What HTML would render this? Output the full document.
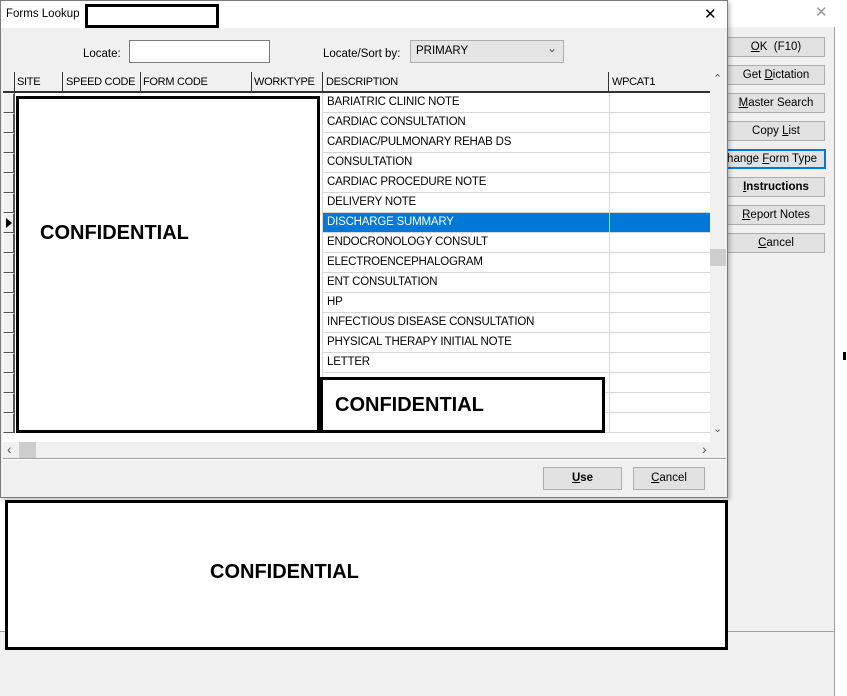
<!DOCTYPE html>
<html><head><style>
*{box-sizing:border-box;margin:0;padding:0}
body{width:847px;height:696px;position:relative;background:#fff;font-family:"Liberation Sans",sans-serif;font-size:11px;color:#000;overflow:hidden}
.a{position:absolute}
.btn{position:absolute;background:#e1e1e1;border:1px solid #adadad;text-align:center;line-height:18px;font-size:11.5px}
.cell{position:absolute;height:20px;line-height:19px;padding-left:4px;border-bottom:1px solid #d6d6d6;white-space:nowrap;overflow:hidden;font-size:11.5px;letter-spacing:-0.2px}
.hd{position:absolute;top:76px;font-size:11px;letter-spacing:-0.3px;white-space:nowrap}
.conf{font-weight:bold;font-size:20px;font-family:"Liberation Sans",sans-serif}
</style></head><body>
<div class="a" style="left:727px;top:27px;width:108px;height:604px;background:#f0f0f0;border-right:1px solid #a0a0a0"></div>
<div class="a" style="left:815px;top:3px;font-size:15px;color:#999">✕</div>
<div class="a" style="left:0;top:631px;width:835px;height:65px;background:#f0f0f0;border-top:1px solid #a0a0a0;border-right:1px solid #a0a0a0"></div>
<div class="a" style="left:843px;top:352px;width:3px;height:8px;background:#000"></div>
<div class="btn" style="left:727px;top:37px;width:98px"><u>O</u>K&nbsp; (F10)</div>
<div class="btn" style="left:727px;top:65px;width:98px">Get <u>D</u>ictation</div>
<div class="btn" style="left:727px;top:93px;width:98px"><u>M</u>aster Search</div>
<div class="btn" style="left:727px;top:121px;width:98px">Copy <u>L</u>ist</div>
<div class="btn" style="left:712px;top:149px;width:114px;border:2px solid #0078d7;line-height:16px;text-align:right;padding-right:7px">hange <u>F</u>orm Type</div>
<div class="btn" style="left:727px;top:177px;width:98px;font-weight:bold"><u>I</u>nstructions</div>
<div class="btn" style="left:727px;top:205px;width:98px"><u>R</u>eport Notes</div>
<div class="btn" style="left:727px;top:233px;width:98px"><u>C</u>ancel</div>

<div class="a" style="left:0;top:0;width:728px;height:498px;border:1px solid #7a7a7a;background:#f0f0f0;box-shadow:2px 2px 4px rgba(0,0,0,.25)"></div>
<div class="a" style="left:1px;top:1px;width:726px;height:27px;background:#fff"></div>
<div class="a" style="left:6px;top:8px;font-size:11.5px">Forms Lookup</div>
<div class="a" style="left:85px;top:4px;width:134px;height:24px;border:3px solid #000;background:#fff"></div>
<div class="a" style="left:704px;top:5px;font-size:15px">✕</div>
<div class="a" style="left:83px;top:48px;font-size:11.5px">Locate:</div>
<div class="a" style="left:129px;top:40px;width:141px;height:23px;border:1px solid #7a7a7a;background:#fff"></div>
<div class="a" style="left:323px;top:48px;font-size:11.5px">Locate/Sort by:</div>
<div class="a" style="left:410px;top:40px;width:154px;height:23px;border:1px solid #adadad;background:#e5e5e5;padding:4px 5px;font-size:11.5px">PRIMARY<span style="position:absolute;right:6px;top:0px;font-size:12px;color:#555">&#8964;</span></div>
<div class="a" style="left:3px;top:72px;width:723px;height:370px;background:#fff"></div>
<div class="a" style="left:3px;top:72px;width:707px;height:21px;background:#f0f0f0;border-bottom:2px solid #333"></div>
<div class="a" style="left:14px;top:72px;width:1px;height:20px;background:#333"></div>
<div class="hd" style="left:17px">SITE</div>
<div class="a" style="left:62px;top:72px;width:1px;height:20px;background:#333"></div>
<div class="hd" style="left:66px">SPEED CODE</div>
<div class="a" style="left:140px;top:72px;width:1px;height:20px;background:#333"></div>
<div class="hd" style="left:143px">FORM CODE</div>
<div class="a" style="left:251px;top:72px;width:1px;height:20px;background:#333"></div>
<div class="hd" style="left:254px">WORKTYPE</div>
<div class="a" style="left:322px;top:72px;width:1px;height:20px;background:#333"></div>
<div class="hd" style="left:326px">DESCRIPTION</div>
<div class="a" style="left:608px;top:72px;width:1px;height:20px;background:#333"></div>
<div class="hd" style="left:612px">WPCAT1</div>
<div id="rows"></div>
<div class="a" style="left:710px;top:72px;width:16px;height:370px;background:#f0f0f0"></div>
<div class="a" style="left:713px;top:72px;font-size:11px;color:#555">&#8963;</div>
<div class="a" style="left:710px;top:249px;width:16px;height:17px;background:#cdcdcd"></div>
<div class="a" style="left:713px;top:422px;font-size:11px;color:#555">&#8964;</div>
<div class="a" style="left:3px;top:442px;width:723px;height:16px;background:#f0f0f0"></div>
<div class="a" style="left:7px;top:441px;font-size:14px;color:#555">&#8249;</div>
<div class="a" style="left:19px;top:442px;width:17px;height:16px;background:#cdcdcd"></div>
<div class="a" style="left:702px;top:441px;font-size:14px;color:#555">&#8250;</div>
<div class="a" style="left:3px;top:458px;width:723px;height:1px;background:#a0a0a0"></div>
<div class="a" style="left:3px;top:459px;width:723px;height:1px;background:#fff"></div>
<div class="btn" style="left:543px;top:467px;width:79px;height:23px;line-height:21px;font-weight:bold"><u>U</u>se</div>
<div class="btn" style="left:633px;top:467px;width:72px;height:23px;line-height:21px"><u>C</u>ancel</div>

<div class="a" style="left:16px;top:96px;width:304px;height:337px;border:3px solid #000;background:#fff"></div>
<div class="a conf" style="left:40px;top:222px">CONFIDENTIAL</div>
<div class="a" style="left:320px;top:377px;width:285px;height:56px;border:3px solid #000;background:#fff"></div>
<div class="a conf" style="left:335px;top:394px">CONFIDENTIAL</div>
<div class="a" style="left:5px;top:500px;width:723px;height:150px;border:3px solid #000;background:#fff"></div>
<div class="a conf" style="left:210px;top:561px">CONFIDENTIAL</div>

<script>
var d=["BARIATRIC CLINIC NOTE","CARDIAC CONSULTATION","CARDIAC/PULMONARY REHAB DS","CONSULTATION","CARDIAC PROCEDURE NOTE","DELIVERY NOTE","DISCHARGE SUMMARY","ENDOCRONOLOGY CONSULT","ELECTROENCEPHALOGRAM","ENT CONSULTATION","HP","INFECTIOUS DISEASE CONSULTATION","PHYSICAL THERAPY INITIAL NOTE","LETTER","","",""];
var h="";
for(var i=0;i<d.length;i++){var y=93+i*20;var s=i==6;
h+='<div class="a" style="left:3px;top:'+y+'px;width:12px;height:20px;background:#f0f0f0;border:1px solid #fff;border-right:2px solid #555;border-bottom:1px solid #555"></div>';
if(s)h+='<div class="a" style="left:6px;top:'+(y+5)+'px;width:0;height:0;border-left:6px solid #000;border-top:5px solid transparent;border-bottom:5px solid transparent"></div>';
h+='<div class="cell" style="left:322px;top:'+y+'px;width:287px;'+(s?'background:#0078d7;color:#fff;':'')+'border-left:1px solid #d6d6d6">'+d[i]+'</div>';
h+='<div class="cell" style="left:609px;top:'+y+'px;width:101px;border-left:1px solid #d6d6d6;'+(s?'background:#0078d7;':'')+'"></div>';}
document.getElementById('rows').outerHTML=h;
</script>
</body></html>
